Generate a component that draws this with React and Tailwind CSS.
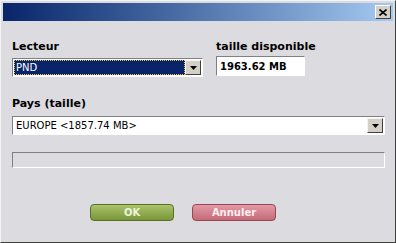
const font = { fontFamily: '"DejaVu Sans", Verdana, sans-serif' };

function DropArrow() {
  return (
    <div className="flex h-[15px] w-[16px] items-center justify-center border border-t-[#f4f4f4] border-l-[#f4f4f4] border-r-[#404040] border-b-[#404040] bg-[#d4d0c8]">
      <svg width="7" height="4" viewBox="0 0 7 4">
        <path d="M0 0h7L3.5 4z" fill="#000" />
      </svg>
    </div>
  );
}

function Select({ value, selected, className }) {
  return (
    <div
      className={`flex h-[19px] items-center border border-t-[#808080] border-l-[#808080] border-r-[#fff] border-b-[#fff] bg-white p-px ${className}`}
    >
      <div className="flex h-full flex-1 items-center">
        <span
          className={`flex h-full flex-1 items-center pl-[2px] text-[10px] ${
            selected ? "bg-[#0a246a] text-white outline-1 outline-dotted outline-[#f0c040] -outline-offset-1" : "text-black"
          }`}
        >
          {value}
        </span>
      </div>
      <DropArrow />
    </div>
  );
}

export default function App() {
  return (
    <div
      className="flex h-[243px] w-[396px] flex-col border border-t-[#f4f4f4] border-l-[#f4f4f4] border-r-[#404040] border-b-[#404040] bg-[#dcdce0] p-[2px]"
      style={font}
    >
      <div className="flex h-[18px] items-center justify-end bg-gradient-to-r from-[#0a246a] to-[#a6caf0] pr-[2px]">
        <div className="flex h-[14px] w-[16px] items-center justify-center border border-t-[#fff] border-l-[#fff] border-r-[#404040] border-b-[#404040] bg-[#d4d0c8]">
          <svg width="8" height="7" viewBox="0 0 8 7">
            <path d="M0.5 0.5l7 6M7.5 0.5l-7 6" stroke="#000" strokeWidth="1.6" />
          </svg>
        </div>
      </div>

      <div className="flex flex-1 flex-col px-[9px] pt-[19px]">
        <div className="grid grid-cols-[191px_89px] gap-x-[13px]">
          <div className="text-[11px] font-bold leading-[13px] text-black">Lecteur</div>
          <div className="whitespace-nowrap text-[11px] font-bold leading-[13px] text-black">taille disponible</div>
          <Select value="PND" selected className="mt-[5px]" />
          <div className="mt-[3px] flex h-[20px] items-center border border-t-[#808080] border-l-[#808080] border-r-[#fff] border-b-[#fff] bg-white pl-[3px] text-[10px] font-bold text-black">
            1963.62 MB
          </div>
        </div>

        <div className="mt-[20px] text-[11px] font-bold leading-[13px] text-black">Pays (taille)</div>
        <Select value="EUROPE <1857.74 MB>" className="mt-[6px] w-[373px]" />

        <div className="mt-[17px] h-[16px] w-[373px] border border-t-[#808080] border-l-[#808080] border-r-[#fff] border-b-[#fff] bg-[#dcdce0]" />

        <div className="mt-[36px] flex justify-center gap-[18px] pr-[30px]">
          <button className="flex h-[17px] w-[84px] items-center justify-center rounded-[4px] border border-[#5b7024] bg-gradient-to-b from-[#a9c46a] to-[#7a963a] text-[10px] font-bold text-[#eef4dc]">
            OK
          </button>
          <button className="flex h-[17px] w-[84px] items-center justify-center rounded-[4px] border border-[#9a4652] bg-gradient-to-b from-[#e29aa4] to-[#c56a78] text-[10px] font-bold text-[#fbeef0]">
            Annuler
          </button>
        </div>
      </div>
    </div>
  );
}
